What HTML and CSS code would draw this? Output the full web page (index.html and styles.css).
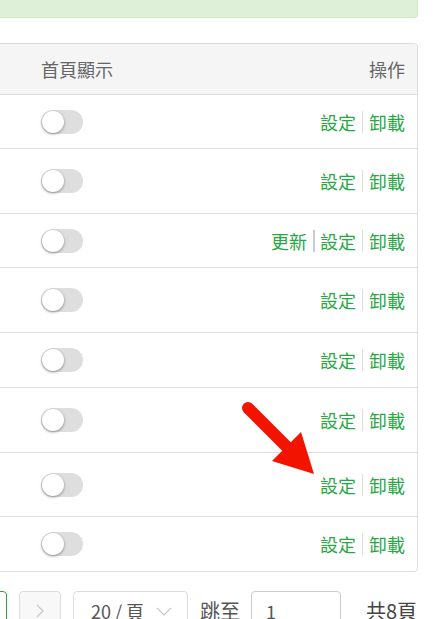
FILE: index.html
```html
<!DOCTYPE html>
<html>
<head>
    <meta http-equiv="Content-Type" content="text/html; charset=UTF-8">
    <title>外掛管理</title>
    <link rel="stylesheet" href="styles.css">
</head>
<body>
<div class="page">
    <div class="alert"></div>

    <div class="table-wrap">
        <table class="plugin-table">
            <thead>
            <tr>
                <th class="col-name"></th>
                <th class="col-home">首頁顯示</th>
                <th class="col-ops">操作</th>
            </tr>
            </thead>
            <tbody>
            <tr class="r54"><td></td><td><span class="switch"></span></td><td class="ops"><a href="#">設定</a><i class="sep"></i><a href="#">卸載</a></td></tr>
            <tr class="r65"><td></td><td><span class="switch"></span></td><td class="ops"><a href="#">設定</a><i class="sep"></i><a href="#">卸載</a></td></tr>
            <tr class="r54"><td></td><td><span class="switch"></span></td><td class="ops"><a href="#">更新</a><i class="sep dark"></i><a href="#">設定</a><i class="sep"></i><a href="#">卸載</a></td></tr>
            <tr class="r65"><td></td><td><span class="switch"></span></td><td class="ops"><a href="#">設定</a><i class="sep"></i><a href="#">卸載</a></td></tr>
            <tr class="r55"><td></td><td><span class="switch"></span></td><td class="ops"><a href="#">設定</a><i class="sep"></i><a href="#">卸載</a></td></tr>
            <tr class="r65"><td></td><td><span class="switch"></span></td><td class="ops"><a href="#">設定</a><i class="sep"></i><a href="#">卸載</a></td></tr>
            <tr class="r64"><td></td><td><span class="switch"></span></td><td class="ops"><a href="#">設定</a><i class="sep"></i><a href="#">卸載</a></td></tr>
            <tr class="r55 last"><td></td><td><span class="switch"></span></td><td class="ops"><a href="#">設定</a><i class="sep"></i><a href="#">卸載</a></td></tr>
            </tbody>
        </table>

        <svg class="pointer" width="90" height="90" viewBox="235 395 90 90">
            <line x1="248" y1="408" x2="290" y2="450" stroke="#f31400" stroke-width="12" stroke-linecap="round"/>
            <polygon points="301,432 272,461 314,474" fill="#f31400"/>
        </svg>
    </div>

    <div class="pager">
        <a class="pg-btn active" href="#">8</a>
        <a class="pg-btn disabled" href="#">
            <svg width="10" height="14" viewBox="0 0 10 14"><path d="M2 1l6 6-6 6" fill="none" stroke="#c8c8c8" stroke-width="1.3"/></svg>
        </a>
        <div class="pg-size">20 / 頁
            <svg width="16" height="9" viewBox="0 0 16 9"><path d="M1 1l7 7 7-7" fill="none" stroke="#c8c8c8" stroke-width="1.2"/></svg>
        </div>
        <span class="pg-label">跳至</span>
        <input class="pg-input" type="text" value="1">
        <span class="pg-total">共8頁</span>
    </div>
</div>
</body>
</html>
```

FILE: styles.css
```css
body{margin:0; overflow:hidden; font-family:"Noto Sans CJK TC", "Noto Sans", sans-serif; color:#666;}
.page{margin-left:-35px; width:453px;}

.alert{height:17px; background:#dff0d8; border:1px solid #d3e9c9; border-top:none; border-radius:0 0 4px 4px;}

.table-wrap{position:relative; margin-top:25px;}
.plugin-table{width:100%; table-layout:fixed; border-collapse:separate; border-spacing:0; border:1px solid #ddd; border-radius:4px; font-size:18px;}
.plugin-table th{height:50px; padding:0 12px; background:#f5f5f5; border-bottom:1px solid #ddd; font-weight:normal; text-align:left; color:#666; line-height:24px;}
.plugin-table th:first-child{border-radius:4px 0 0 0;}
.plugin-table th:last-child{border-radius:0 4px 0 0;}
.plugin-table .col-name{width:39px;}
.plugin-table .col-home{width:160px;}
.plugin-table .col-ops{text-align:right;}
.plugin-table td{padding:0 12px; border-bottom:1px solid #ddd; vertical-align:middle; line-height:24px;}
.plugin-table tr.last td{border-bottom:none;}
.r54 td{height:53px;}
.r55 td{height:54px;}
.r64 td{height:63px;}
.r65 td{height:64px;}
.plugin-table tr.last td{height:54px;}

.switch{display:block; position:relative; width:42px; height:24px; border-radius:12px; background:#dedede;}
.switch:after{content:""; position:absolute; left:1px; top:1px; width:22px; height:22px; border-radius:50%; background:#fff; box-shadow:0 1px 3px rgba(0,0,0,.4);}

.ops{text-align:right; white-space:nowrap; font-size:0;}
.ops a{font-size:18px; color:#27a844; text-decoration:none; vertical-align:middle;}
.ops .sep{display:inline-block; width:1px; height:22px; margin:0 6px; background:#ddd; vertical-align:middle;}
.ops .sep.dark{background:#c9ccd2; width:2px; margin:0 5px 0 6px;}

.pointer{position:absolute; left:270px; top:352px;}

.pager{display:flex; align-items:center; margin-top:19px; font-size:18px; color:#555;}
.pg-btn{display:flex; align-items:center; justify-content:center; box-sizing:border-box; width:42px; height:40px; margin-right:12px; border:1px solid #ddd; border-radius:4px; color:#555; text-decoration:none;}
.pg-btn.active{border-color:#27a844; color:#27a844;}
.pg-btn.disabled{background:#f8f8f8;}
.pg-size{display:flex; align-items:center; box-sizing:border-box; width:115px; height:40px; padding-left:17px; border:1px solid #ddd; border-radius:4px; line-height:24px;}
.pg-size svg{margin-left:12px;}
.pg-label{margin-left:12px; font-size:20px; line-height:24px;}
.pg-input{box-sizing:border-box; width:90px; height:40px; margin-left:11px; padding:0 14px; border:1px solid #ccc; border-radius:4px; font:inherit; color:#555;}
.pg-total{margin-left:25px; font-size:20px; color:#444; line-height:24px;}
```
